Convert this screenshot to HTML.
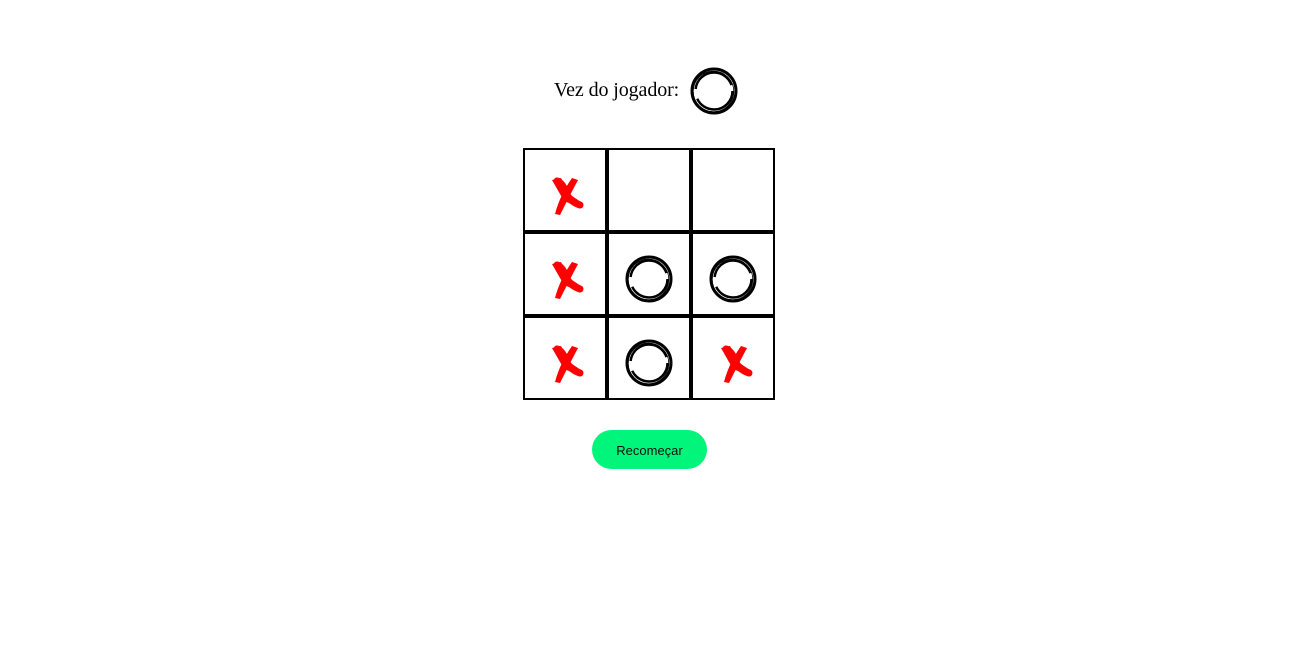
<!DOCTYPE html>
<html><head><style>
body{margin:0;background:#fff;width:1298px;height:668px;position:relative;overflow:hidden}
.t{position:absolute;left:554px;top:79px;font:20px "Liberation Serif",serif;color:#000;letter-spacing:-0.1px}
.c{position:absolute;width:80px;height:80px;border:2px solid #000}
.btn{position:absolute;left:592px;top:430px;width:115px;height:39px;border-radius:20px;background:#00f57a;font:13px "Liberation Sans",sans-serif;color:#111;text-align:center;line-height:41px}
svg{position:absolute}
</style></head><body>
<div class="t">Vez do jogador:</div>
<svg style="left:689px;top:66px" width="50" height="50" viewBox="0 0 50 50"><circle cx="25" cy="25" r="22" fill="none" stroke="#000" stroke-width="3"/><circle cx="25" cy="25" r="18.5" fill="none" stroke="#000" stroke-width="2.5" stroke-dasharray="50 10"/><circle cx="24.5" cy="25.5" r="20.3" fill="none" stroke="#000" stroke-width="0.8"/></svg>
<div class="c" style="left:523px;top:148px"></div>
<div class="c" style="left:607px;top:148px"></div>
<div class="c" style="left:691px;top:148px"></div>
<div class="c" style="left:523px;top:232px"></div>
<div class="c" style="left:607px;top:232px"></div>
<div class="c" style="left:691px;top:232px"></div>
<div class="c" style="left:523px;top:316px"></div>
<div class="c" style="left:607px;top:316px"></div>
<div class="c" style="left:691px;top:316px"></div>
<svg width="0" height="0"><defs>
<g id="x"><path d="M3 5 L12 3 L20 19 L32 27 L30 32 L15 26 Z" fill="#f00"/><path d="M8 6 Q14 8 18 20 Q22 27 31 30" fill="none" stroke="#f00" stroke-width="7" stroke-linecap="round"/><path d="M23 3 L29 5 Q21 20 11 40 L6 39 Q11 20 23 3 Z" fill="#f00"/></g>
<g id="o"><circle cx="25" cy="25" r="22" fill="none" stroke="#000" stroke-width="3"/><circle cx="25" cy="25" r="18.5" fill="none" stroke="#000" stroke-width="2.5" stroke-dasharray="50 10"/><circle cx="24.5" cy="25.5" r="20.3" fill="none" stroke="#000" stroke-width="0.8"/></g>
</defs></svg>
<svg style="left:549px;top:175px" width="40" height="42"><use href="#x"/></svg>
<svg style="left:549px;top:259px" width="40" height="42"><use href="#x"/></svg>
<svg style="left:549px;top:343px" width="40" height="42"><use href="#x"/></svg>
<svg style="left:718px;top:343px" width="40" height="42"><use href="#x"/></svg>
<svg style="left:624px;top:254px" width="50" height="50"><use href="#o"/></svg>
<svg style="left:708px;top:254px" width="50" height="50"><use href="#o"/></svg>
<svg style="left:624px;top:338px" width="50" height="50"><use href="#o"/></svg>
<div class="btn">Recomeçar</div>
</body></html>
